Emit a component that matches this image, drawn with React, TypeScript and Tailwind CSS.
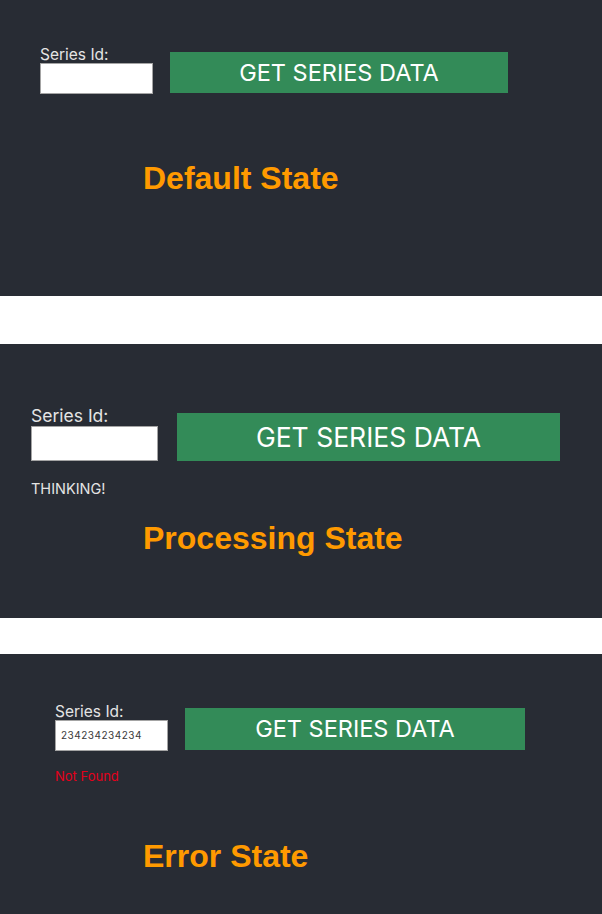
const sans = { fontFamily: 'Inter, Roboto, "Noto Sans", sans-serif' };
const title = { fontFamily: '"Liberation Sans", Arial, sans-serif' };

const App = () => {
  return (
    <div className="w-[602px] bg-white" style={sans}>
      {/* Default */}
      <section className="h-[296px] bg-[#282c34] pt-[47px]">
        <div className="flex items-end pl-[40px]">
          <div className="flex flex-col">
            <label className="text-[15.5px] leading-none text-[#e4e4e4]">Series Id:</label>
            <input className="h-[31px] w-[113px] border border-[#a4a4a4] bg-white outline-none" />
          </div>
          <button className="mb-[1px] ml-[17px] flex h-[41px] w-[338px] items-center justify-center bg-[#338b58] pt-[1px] text-[23.5px] font-normal leading-none text-white">
            GET SERIES DATA
          </button>
        </div>
        <h2 className="mt-[68px] pl-[143px] text-[32px] font-bold leading-none text-[#ff9a00]" style={title}>
          Default State
        </h2>
      </section>

      <div className="h-[48px]" />

      {/* Processing */}
      <section className="h-[274px] bg-[#282c34] pt-[63px]">
        <div className="flex items-end pl-[31px]">
          <div className="flex flex-col">
            <label className="text-[17.5px] leading-none text-[#e4e4e4]">Series Id:</label>
            <input className="mt-[1px] h-[35px] w-[127px] border border-[#a4a4a4] bg-white outline-none" />
          </div>
          <button className="ml-[19px] flex h-[48px] w-[383px] items-center justify-center bg-[#338b58] pt-[1px] text-[26.5px] font-normal leading-none text-white">
            GET SERIES DATA
          </button>
        </div>
        <p className="mt-[21px] pl-[31px] text-[14.5px] leading-none text-[#e4e4e4]">THINKING!</p>
        <h2 className="mt-[26px] pl-[143px] text-[32px] font-bold leading-none text-[#ff9a00]" style={title}>
          Processing State
        </h2>
      </section>

      <div className="h-[36px]" />

      {/* Error */}
      <section className="h-[260px] bg-[#282c34] pt-[50px]">
        <div className="flex items-end pl-[55px]">
          <div className="flex flex-col">
            <label className="text-[15.5px] leading-none text-[#e4e4e4]">Series Id:</label>
            <input
              readOnly
              value="234234234234"
              className="h-[31px] w-[113px] border border-[#a4a4a4] bg-white px-[5px] text-[10px] tracking-[0.5px] text-[#3a3a3a] outline-none"
            />
          </div>
          <button className="mb-[1px] ml-[17px] flex h-[42px] w-[340px] items-center justify-center bg-[#338b58] pt-[1px] text-[23.5px] font-normal leading-none text-white">
            GET SERIES DATA
          </button>
        </div>
        <p className="mt-[19px] pl-[55px] text-[13px] leading-none text-[#e4001b]">Not Found</p>
        <h2 className="mt-[57px] pl-[143px] text-[32px] font-bold leading-none text-[#ff9a00]" style={title}>
          Error State
        </h2>
      </section>
    </div>
  );
};

export default App;
